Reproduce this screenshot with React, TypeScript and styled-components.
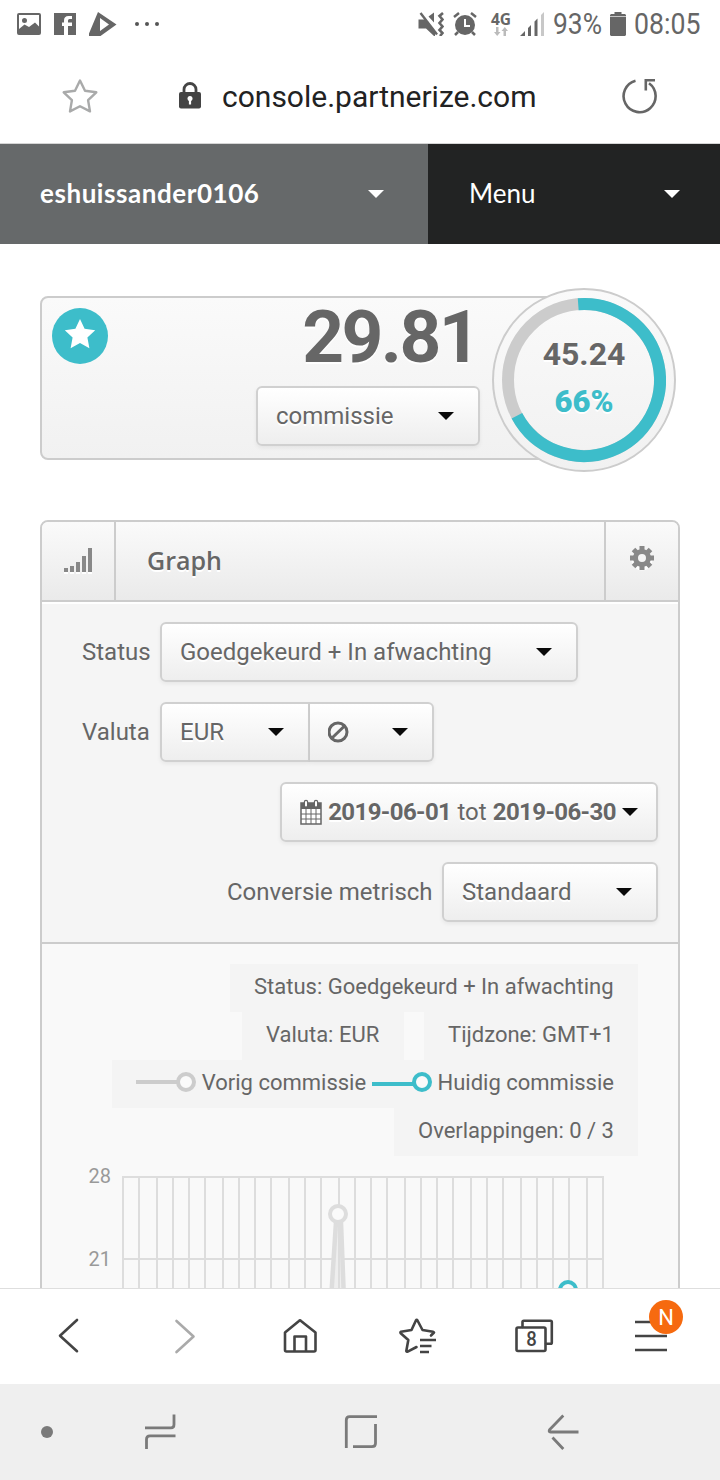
import React from "react";
import styled, { createGlobalStyle } from "styled-components";

const teal = "#3dbdca";
const ink = "#666";
const line = "#ccc";

const Global = createGlobalStyle`
  * { box-sizing: border-box; }
  body { margin: 0; background: #fff; font-family: Roboto, "Liberation Sans", sans-serif; color: ${ink}; }
  svg { display: block; flex: none; }
`;

const Screen = styled.div`
  width: 720px;
  height: 1480px;
  display: flex;
  flex-direction: column;
  overflow: hidden;
`;

/* system status bar */
const StatusBar = styled.div`
  height: 48px;
  flex: none;
  display: flex;
  align-items: center;
  justify-content: space-between;
  padding: 0 19px 0 17px;
`;
const IconGroup = styled.div<{ $gap: number }>`
  display: flex;
  align-items: center;
  gap: ${(p) => p.$gap}px;
`;
const StatusText = styled.span<{ $width: number; $scale: number; $left: number }>`
  width: ${(p) => p.$width}px;
  margin-left: ${(p) => p.$left}px;
  font-size: 30px;
  line-height: 50px;
  white-space: nowrap;
  transform: scaleX(${(p) => p.$scale});
  transform-origin: left;
`;
const AlarmIcon = styled.svg`
  margin-left: 9px;
`;
const Network = styled.div`
  display: flex;
  flex-direction: column;
  align-items: center;
  width: 20px;
  margin: 0 9px 0 14px;
  font: 700 15.5px/15px "Open Sans", sans-serif;
`;

/* browser address bar */
const AddressBar = styled.div`
  height: 96px;
  flex: none;
  display: flex;
  align-items: center;
  border-bottom: 1px solid #d5d5d5;
  padding: 0 62px;
`;
const Address = styled.div`
  flex: 1;
  display: flex;
  align-items: center;
  gap: 20px;
  padding: 1px 0 0 80px;
  font-size: 30px;
  color: #222;
`;

/* site navigation */
const SiteNav = styled.nav`
  height: 100px;
  flex: none;
  display: flex;
`;
const NavItem = styled.div<{ $w: number; $bg: string; $bold?: boolean; $ls: number }>`
  width: ${(p) => p.$w}px;
  background: ${(p) => p.$bg};
  color: #fff;
  display: flex;
  align-items: center;
  justify-content: space-between;
  padding: 0 ${(p) => (p.$bold ? 44 : 40)}px 2px ${(p) => (p.$bold ? 40 : 41)}px;
  font-family: Lato, "Open Sans", sans-serif;
  font-size: 26px;
  font-weight: ${(p) => (p.$bold ? 700 : 400)};
  letter-spacing: ${(p) => p.$ls}px;
  i { margin-top: 2px; }
`;
const Caret = styled.i<{ $color?: string }>`
  flex: none;
  width: 0;
  height: 0;
  border: 8px solid transparent;
  border-top-color: ${(p) => p.$color || "#0a0a0a"};
  border-bottom: 0;
`;

/* page */
const Page = styled.main`
  flex: 1;
  min-height: 0;
  overflow: hidden;
  padding: 52px 40px 0;
`;
const Summary = styled.section`
  position: relative;
  width: 560px;
  height: 164px;
  display: flex;
  justify-content: space-between;
  border: 2px solid ${line};
  border-radius: 8px;
  background: linear-gradient(#fafafa, #f1f1f1);
  padding: 10px 118px 0 10px;
`;
const Totals = styled.div`
  display: flex;
  flex-direction: column;
  align-items: flex-end;
`;
const Amount = styled.div`
  height: 78px;
  margin: 0 2px 0 0;
  font-size: 73px;
  line-height: 58px;
  font-weight: 700;
  letter-spacing: -2.6px;
  text-shadow: 0 2px 0 #fff;
`;
const Select = styled.div<{ $w: number; $right?: number; $joined?: "left" | "right" }>`
  width: ${(p) => p.$w}px;
  height: 60px;
  flex: none;
  display: flex;
  align-items: center;
  justify-content: space-between;
  padding: 0 ${(p) => p.$right ?? 24}px 0 18px;
  border: 2px solid #d0d0d0;
  border-left-width: ${(p) => (p.$joined === "right" ? 0 : 2)}px;
  border-radius: ${(p) => (p.$joined === "left" ? "6px 0 0 6px" : p.$joined === "right" ? "0 6px 6px 0" : "6px")};
  background: linear-gradient(#fff, #eee);
  box-shadow: 0 2px 4px rgba(0, 0, 0, 0.06);
  font-size: 24px;
  white-space: nowrap;
  text-shadow: 0 2px 0 #fff;
  b { letter-spacing: -0.6px; }
`;
const Gauge = styled.div`
  position: absolute;
  left: 450px;
  top: -10px;
  width: 184px;
  height: 184px;
`;
const GaugeText = styled.div`
  position: absolute;
  inset: 0;
  display: flex;
  flex-direction: column;
  align-items: center;
  padding-top: 42px;
  font-size: 32px;
  line-height: 48px;
  font-weight: 700;
  text-shadow: 0 2px 0 #fff;
  b { color: ${teal}; font-size: 31px; }
`;

/* graph panel */
const Panel = styled.section`
  margin-top: 60px;
  height: 900px;
  border: 2px solid ${line};
  border-radius: 8px;
  background: #f9f9f9;
  overflow: hidden;
`;
const PanelHead = styled.header`
  height: 80px;
  display: flex;
  border-bottom: 2px solid ${line};
  background: linear-gradient(#fafafa, #eaeaea);
`;
const HeadCell = styled.div`
  width: 72px;
  display: flex;
  align-items: center;
  justify-content: center;
`;
const PanelTitle = styled.h2`
  flex: 1;
  margin: 0;
  padding-left: 31px;
  border: solid ${line};
  border-width: 0 2px;
  font: 600 25px/77px "Open Sans", sans-serif;
  text-shadow: 0 2px 0 #fff;
`;
const Filters = styled.div`
  height: 342px;
  padding: 18px 20px 0 40px;
  display: flex;
  flex-direction: column;
  gap: 20px;
  background: #f5f5f5;
  border-top: 2px solid #fff;
  border-bottom: 2px solid ${line};
`;
const Field = styled.div<{ $end?: boolean }>`
  display: flex;
  align-items: center;
  justify-content: ${(p) => (p.$end ? "flex-end" : "flex-start")};
`;
const Label = styled.label<{ $w: number }>`
  width: ${(p) => p.$w}px;
  font-size: 24px;
  line-height: 60px;
  white-space: nowrap;
`;
const Plot = styled.div`
  padding: 20px 40px 0 0;
`;
const Legend = styled.div`
  display: flex;
  flex-direction: column;
  align-items: flex-end;
`;
const LegendRow = styled.div<{ $gap?: number }>`
  display: flex;
  gap: ${(p) => p.$gap || 0}px;
`;
const LegendItem = styled.div<{ $w: number }>`
  width: ${(p) => p.$w}px;
  height: 48px;
  padding: 0 24px 3px;
  display: flex;
  align-items: center;
  justify-content: space-between;
  background: #f4f4f4;
  font-size: 22px;
  white-space: nowrap;
  svg { margin-top: -1px; }
`;
const Chart = styled.div`
  display: flex;
  margin-top: 8px;
`;
const Axis = styled.div`
  width: 69px;
  text-align: right;
  font-size: 20px;
  line-height: 24px;
  color: #999;
  div { height: 83px; }
`;

/* bottom bars */
const Toolbar = styled.nav`
  height: 96px;
  flex: none;
  display: flex;
  padding-left: 10px;
  border-top: 1px solid #dedede;
  background: #fff;
`;
const Tool = styled.div`
  position: relative;
  width: 116px;
`;
const Badge = styled.span`
  position: absolute;
  left: 59px;
  top: 11px;
  width: 34px;
  height: 34px;
  border-radius: 50%;
  background: #f66a0f;
  color: #fff;
  font-size: 22px;
  line-height: 36px;
  text-align: center;
`;
const SystemNav = styled.nav`
  height: 96px;
  flex: none;
  display: grid;
  grid-template-columns: 94px 132px 270px 134px;
  background: #efefef;
`;

const gridX = [123, 139, 157, 173, 189, 205, 223, 239, 255, 271, 289, 305, 321, 339, 355, 371, 387, 405, 421, 437, 453, 471, 487, 503, 521, 537, 553, 569, 587, 603];

const stroke = { fill: "none", stroke: "#444", strokeWidth: 2.6, strokeLinejoin: "round", strokeLinecap: "round" } as const;
const sysStroke = { fill: "none", stroke: "#7a7a7a", strokeWidth: 2.8 } as const;

const Marker = ({ color, y }: { color: string; y: number }) => (
  <svg width="60" height="24" viewBox="0 0 60 24">
    <path d={`M0 ${y}H42`} stroke={color} strokeWidth="4" />
    <circle cx="50" cy="12" r="8" fill="#fafafa" stroke={color} strokeWidth="4" />
  </svg>
);

export default function App() {
  return (
    <Screen>
      <Global />
      <StatusBar>
        <IconGroup $gap={12}>
          <svg width="24" height="24" viewBox="0 0 24 24">
            <path fill="#666" fillRule="evenodd" d="M2 1h20a2 2 0 0 1 2 2v18a2 2 0 0 1-2 2H2a2 2 0 0 1-2-2V3a2 2 0 0 1 2-2zm0 2v14l5.500-4.500L12 15l6-4.500 4 4V3zM7.500 6a2.500 2.500 0 1 1 0 5 2.500 2.500 0 0 1 0-5z" />
          </svg>
          <svg width="24" height="24" viewBox="-1 0 24 24">
            <path fill="#666" d="M0 1h22v22h-8v-9h4v-3.500h-4V8.500q0-1.500 1.500-1.500H18V4h-3.500q-4.500 0-4.500 4.500v2H8V14h2v9H0z" />
          </svg>
          <svg width="28" height="24" viewBox="1 0 28 24">
            <path fill="#666" fillRule="evenodd" d="M10 0l18.500 12.500L12.500 24H0zM12 6v13l9-6.500z" />
          </svg>
          <svg width="44" height="24" viewBox="0 0 44 24" fill="#555">
            <circle cx="8" cy="12" r="2" /><circle cx="18" cy="12" r="2" /><circle cx="28" cy="12" r="2" />
          </svg>
        </IconGroup>
        <IconGroup $gap={0}>
          <svg width="26" height="24" viewBox="0 0 26 24">
            <path fill="#666" d="M.5 7.500h7.500L17 19v5h-1L8 16.500H.5zM10.500 4.500L16 .5v10z" />
            <path d="M2.500 1l16.500 21.500" stroke="#666" strokeWidth="2.400" />
            <path d="M25 1l-3.500 3 3 3.500-3 3.500 3 3.500-3 3.500 3 3-2.500 3" fill="none" stroke="#666" strokeWidth="2.600" />
          </svg>
          <AlarmIcon width="24" height="24" viewBox="0 0 24 24">
            <circle cx="12" cy="13" r="10" fill="#666" />
            <path d="M12 7v7h5" stroke="#fff" strokeWidth="2" fill="none" />
            <path d="M1 5l5-4M23 5l-5-4M5 20l-3 3M19 20l3 3" stroke="#666" strokeWidth="2.500" />
          </AlarmIcon>
          <Network>
            4G
            <svg width="14" height="9" viewBox="0 0 14 9" fill="#bbb">
              <path d="M2 0h2.500v5H6.500L3.200 9 0 5h2zM9.500 9H12V4h2L10.800 0 7.500 4h2z" />
            </svg>
          </Network>
          <svg width="24" height="24" viewBox="0 0 24 24" fill="#666">
            <path d="M0 24l5-5v5zM8 16l3-3v11H8zM14.500 9.500l3-3V24h-3z" />
            <path d="M21 3l3-3v24h-3z" fill="#c8c8c8" />
          </svg>
          <StatusText $width={57} $left={9} $scale={0.88}>93%</StatusText>
          <svg width="16" height="24" viewBox="0 0 16 24"><path fill="#666" d="M4.500 0h7v2H15l1 1v20l-1 1H1l-1-1V3l1-1h3.500z" /><path d="M0 4.500h16" stroke="#ddd" strokeWidth=".8" /></svg>
          <StatusText $width={67} $left={8} $scale={0.89}>08:05</StatusText>
        </IconGroup>
      </StatusBar>

      <AddressBar>
        <svg width="36" height="36" viewBox="0 0 36 36">
          <path d="M18 2.500l5 10.200 11.300 1.600-8.200 7.900 1.900 11.200L18 28.200 8 33.400l1.900-11.200-8.200-7.900L13 12.700z" fill="none" stroke="#a9aaaa" strokeWidth="2.400" strokeLinejoin="round" />
        </svg>
        <Address>
          <svg width="24" height="28" viewBox="0 0 24 28">
            <path d="M6 11V7.500a6 6 0 0 1 12 0V11" fill="none" stroke="#444" strokeWidth="2.800" />
            <rect x="1" y="10" width="22" height="16.500" rx="2" fill="#444" />
            <circle cx="12" cy="16.500" r="2.500" fill="#fff" /><path d="M12 17v5.500" stroke="#fff" strokeWidth="2.200" />
          </svg>
          console.partnerize.com
        </Address>
        <svg width="36" height="36" viewBox="0 0 36 36" fill="none" stroke="#666" strokeWidth="2.600">
          <path d="M13.500 2.700A16 16 0 1 0 27 5.200" /><path d="M23.800 12.500V2.300H33" />
        </svg>
      </AddressBar>

      <SiteNav>
        <NavItem $w={428} $bg="#66696a" $bold $ls={0.55}>eshuissander0106<Caret $color="#fff" /></NavItem>
        <NavItem $w={292} $bg="#222323" $ls={0}>Menu<Caret $color="#fff" /></NavItem>
      </SiteNav>

      <Page>
        <Summary>
          <svg width="56" height="56" viewBox="0 0 56 56">
            <circle cx="28" cy="28" r="28" fill={teal} />
            <path fill="#fff" d="M28 11l4.600 9.800 10.600 1.400-7.800 7.300 2 10.700L28 35l-9.400 5.200 2-10.700-7.800-7.300 10.600-1.400z" />
          </svg>
          <Totals>
            <Amount>29.81</Amount>
            <Select $w={224}>commissie<Caret /></Select>
          </Totals>
          <Gauge>
            <svg width="184" height="184" viewBox="-92 -92 184 184">
              <defs>
                <linearGradient id="dial" x1="0" y1="0" x2="0" y2="1"><stop stopColor="#fafafa" /><stop offset="1" stopColor="#f1f1f1" /></linearGradient>
              </defs>
              <circle r="91" fill="url(#dial)" stroke="#ccc" strokeWidth="2" />
              <circle r="76" fill="none" stroke="#ccc" strokeWidth="12" />
              <path d="M-5.800 -75.800A76 76 0 1 1 -67.100 35.700" fill="none" stroke={teal} strokeWidth="12" />
            </svg>
            <GaugeText>45.24<b>66%</b></GaugeText>
          </Gauge>
        </Summary>

        <Panel>
          <PanelHead>
            <HeadCell>
              <svg width="30" height="26" viewBox="0 0 30 26">
                <path d="M1 23h4M7 23h4M13 23h4M19 23h4M25 23h4" stroke="#fff" strokeWidth="6" />
                <path d="M1 20h4v4H1zM7 18h4v6H7zM13 14h4v10h-4zM19 8h4v16h-4zM25 0h4v24h-4z" fill="#888" />
              </svg>
            </HeadCell>
            <PanelTitle>Graph</PanelTitle>
            <HeadCell>
              <svg width="26" height="32" viewBox="-13 -13 26 32">
                <circle cy="2" r="10.500" fill="#fff" />
                <path d="M0-12V12M-12 0H12M-8.500-8.500L8.500 8.500M8.500-8.500L-8.500 8.500" stroke="#888" strokeWidth="5" />
                <circle r="6.500" fill="#f4f4f4" stroke="#888" strokeWidth="5" />
              </svg>
            </HeadCell>
          </PanelHead>
          <Filters>
            <Field><Label $w={78}>Status</Label><Select $w={418}>Goedgekeurd + In afwachting<Caret /></Select></Field>
            <Field>
              <Label $w={78}>Valuta</Label>
              <Select $w={150} $joined="left">EUR<Caret /></Select>
              <Select $w={124} $joined="right">
                <svg width="22" height="26" viewBox="1 0 22 26"><path d="M5 19l12.500-12" stroke={ink} strokeWidth="3" /><circle cx="11" cy="13" r="9" fill="none" stroke={ink} strokeWidth="3" /></svg>
                <Caret />
              </Select>
            </Field>
            <Field $end>
              <Select $w={378} $right={18}>
                <svg width="22" height="26" viewBox="0 0 22 26">
                  <path d="M1 4h20v21H1z" fill="#fff" stroke={ink} strokeWidth="1.500" />
                  <path d="M1 4h20v6H1z" fill={ink} />
                  <path d="M1 15h20M1 20h20M6 10v15M11 10v15M16 10v15" stroke={ink} />
                  <path d="M6 7V3M16 7V3" stroke={ink} strokeWidth="4.500" strokeLinecap="round" /><path d="M6 6.500V3M16 6.500V3" stroke="#fff" strokeWidth="2" strokeLinecap="round" />
                </svg>
                <b>2019-06-01</b>tot<b>2019-06-30</b><Caret />
              </Select>
            </Field>
            <Field $end><Label $w={215}>Conversie metrisch</Label><Select $w={216}>Standaard<Caret /></Select></Field>
          </Filters>
          <Plot>
            <Legend>
              <LegendItem $w={408}>Status: Goedgekeurd + In afwachting</LegendItem>
              <LegendRow $gap={20}>
                <LegendItem $w={162}>Valuta: EUR</LegendItem>
                <LegendItem $w={214}>Tijdzone: GMT+1</LegendItem>
              </LegendRow>
              <LegendItem $w={526}>
                <Marker color="#ccc" y={12} />Vorig commissie<Marker color={teal} y={14} />Huidig commissie
              </LegendItem>
              <LegendItem $w={244}>Overlappingen: 0 / 3</LegendItem>
            </Legend>
            <Chart>
              <Axis><div>28</div><div>21</div></Axis>
              <svg width="520" height="136" viewBox="111 1164 520 136">
                <path d={gridX.map((x) => `M${x} 1176V1300`).join("") + "M122 1177H604M122 1259H604"} stroke="#ddd" strokeWidth="2" fill="none" />
                <path d="M336 1222L331 1300H344L341 1222" fill="#eee" stroke="#ddd" strokeWidth="4.500" />
                <path d="M339 1222V1300" stroke="#ddd" strokeWidth="2" />
                <circle cx="338" cy="1214" r="8" fill="#fafafa" stroke="#ddd" strokeWidth="4" />
                <circle cx="568" cy="1290" r="8" fill="#fafafa" stroke={teal} strokeWidth="4" />
              </svg>
            </Chart>
          </Plot>
        </Panel>
      </Page>

      <Toolbar>
        <Tool><svg width="116" height="95" {...stroke}><path d="M67 31L50 46.700l17 15.500" /></svg></Tool>
        <Tool><svg width="116" height="95" {...stroke} stroke="#aaa"><path d="M50.500 32l17 15.500-17 15.500" /></svg></Tool>
        <Tool>
          <svg width="116" height="95" {...stroke}>
            <path d="M43 43.500L57 32q1-1 2 0l14.500 11.500V61q0 1.500-1.500 1.500H44.500Q43 62.500 43 61zM52.500 62V47.500H64V62" />
          </svg>
        </Tool>
        <Tool>
          <svg width="116" height="95" {...stroke}>
            <path d="M73 46.500l3-3-1-.8-10.500-1.700L59.500 31.500q-.8-1.200-1.600 0L53.500 41 43 42.700q-1 .5-.3 1.500L50.300 51l-2 11q.2 1 1.400.6L58.500 58" />
            <path d="M62 51h16M62 57h11.500M62 63h9" strokeLinecap="butt" />
          </svg>
        </Tool>
        <Tool>
          <svg width="116" height="95" {...stroke}>
            <path d="M48.500 38v-5q0-1.300 1.300-1.300H76.500q1.300 0 1.300 1.300v20.500q0 1.300-1.300 1.300H72" />
            <rect x="42.500" y="38.500" width="29" height="23.500" rx="1.500" />
            <text x="57.500" y="57" textAnchor="middle" textLength="10.500" lengthAdjust="spacingAndGlyphs" fontSize="20" fontWeight="500" fill="#444" stroke="none">8</text>
          </svg>
        </Tool>
        <Tool>
          <svg width="116" height="95" {...stroke} strokeWidth="2.400" strokeLinecap="butt"><path d="M45 33h32M45 47h32M45 61h32" /></svg>
          <Badge>N</Badge>
        </Tool>
      </Toolbar>
      <SystemNav>
        <svg width="94" height="96"><circle cx="47" cy="48" r="6" fill="#7a7a7a" /></svg>
        <svg width="132" height="96" {...sysStroke}><path d="M51 43.800H77Q80 43.800 80 40.500V30.500M81.500 51.800H56q-3.500 0-3.500 3.500V65" /></svg>
        <svg width="270" height="96" {...sysStroke}><path d="M120.300 64V36q0-3.300 3.300-3.300H151M127 62.700h19q3.500 0 3.500-3.500V40" /></svg>
        <svg width="134" height="96" {...sysStroke}><path d="M67.300 31.500L53.500 45.700q-1 2.300 1 2.300H82.500M56.500 53.500L67.300 65" /></svg>
      </SystemNav>
    </Screen>
  );
}
